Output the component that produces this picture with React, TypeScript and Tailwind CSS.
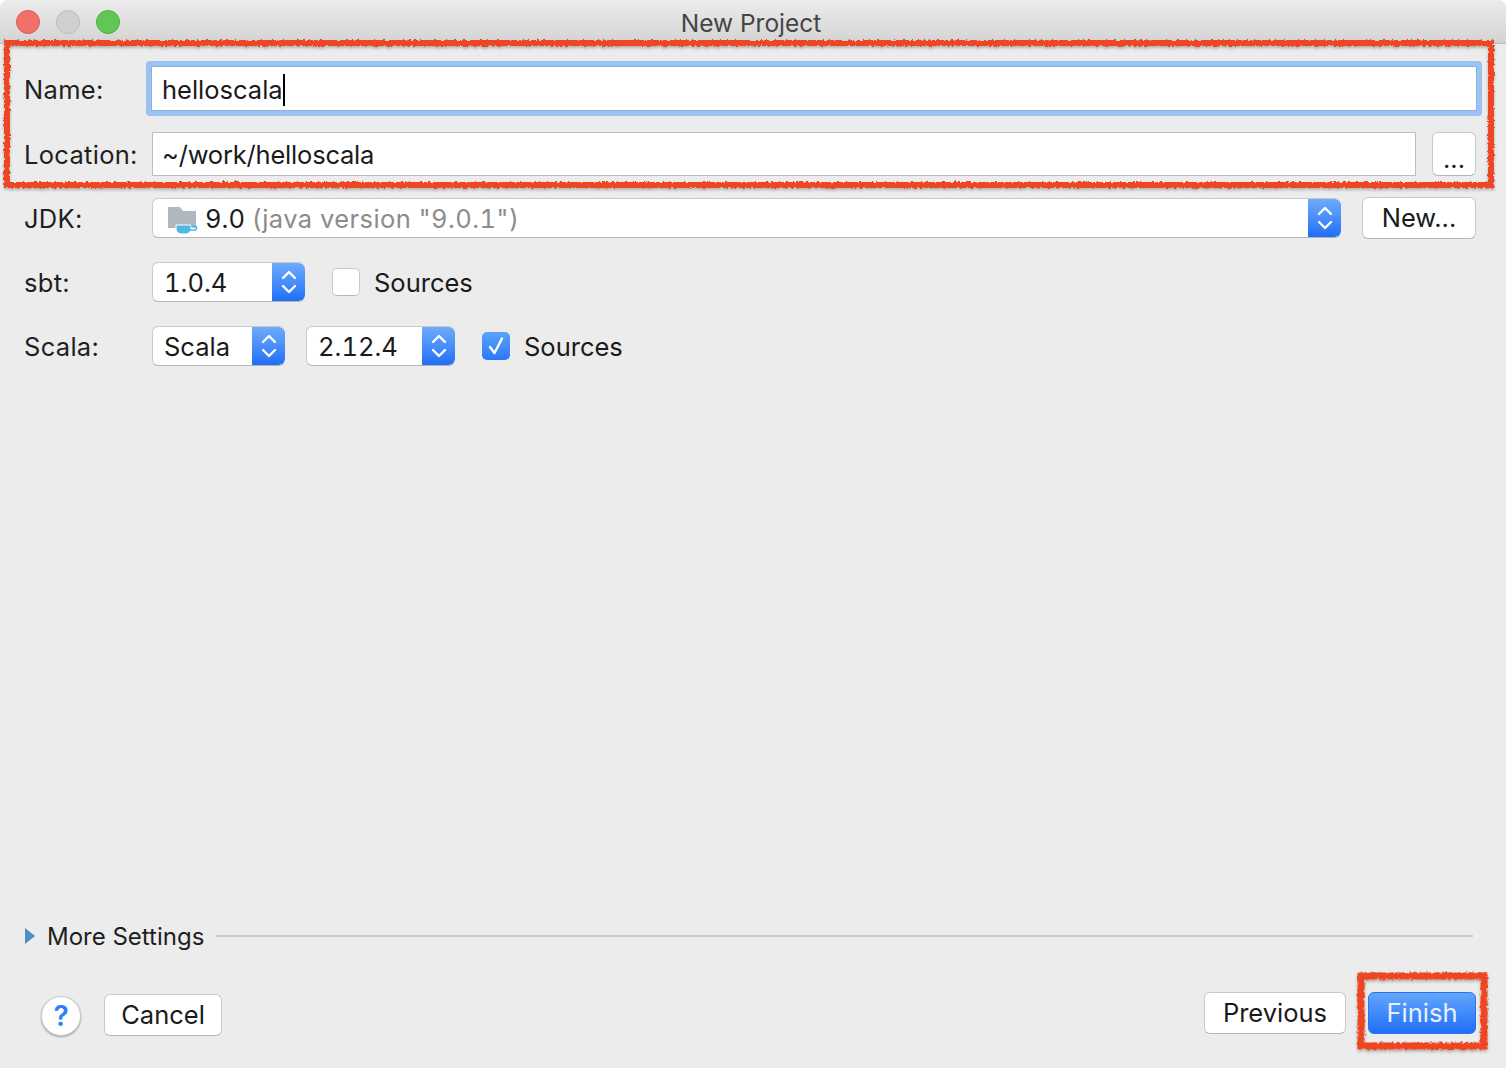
const font = "font-['Inter','Liberation_Sans',Arial,sans-serif]";

// small up/down chevrons on the blue end of a popup button
function Stepper() {
  return (
    <div className="flex h-full w-[33px] shrink-0 items-center justify-center rounded-r-[6px] bg-gradient-to-b from-[#6fabfb] to-[#1f6ef8]">
      <svg width="16" height="28" viewBox="0 0 16 28" fill="none" stroke="#fff" strokeWidth="2.4" strokeLinecap="round" strokeLinejoin="round">
        <path d="M2 10 L8 4 L14 10" />
        <path d="M2 18 L8 24 L14 18" />
      </svg>
    </div>
  );
}

function Select({ width, text }: { width: string; text: string }) {
  return (
    <div className={`flex h-[40px] ${width} items-center overflow-hidden rounded-[6px] border border-r-0 border-[#c9c9c9] border-b-[#b5b5b5] bg-white`}>
      <span className="flex-1 pl-[11px] pt-[2px] text-[25.5px] leading-none text-[#1a1a1a] tabular-nums">{text}</span>
      <Stepper />
    </div>
  );
}

function Check({ on }: { on?: boolean }) {
  if (on) {
    return (
      <div className="flex h-[28px] w-[28px] items-center justify-center rounded-[5px] bg-gradient-to-b from-[#5da3fb] to-[#2a78f8]">
        <svg width="18" height="20" viewBox="0 0 18 20" fill="none" stroke="#fff" strokeWidth="2.4" strokeLinecap="round" strokeLinejoin="round">
          <path d="M3 11 L7.5 17 L15 2.5" />
        </svg>
      </div>
    );
  }
  return <div className="h-[28px] w-[28px] rounded-[5px] border border-[#c9c9c9] border-b-[#b5b5b5] bg-white" />;
}

function Btn({ label, className }: { label: string; className: string }) {
  return (
    <button className={`flex h-[42px] items-center justify-center rounded-[6px] border border-[#c9c9c9] border-b-[#b5b5b5] bg-white text-[25.5px] leading-none text-[#1a1a1a] ${className}`}>
      {label}
    </button>
  );
}

function Label({ text }: { text: string }) {
  return <div className="w-[128px] shrink-0 pt-[2px] text-[25.5px] leading-none tracking-[0.3px] text-[#1f1f1f]">{text}</div>;
}

function JdkIcon() {
  return (
    <svg width="30" height="28" viewBox="0 0 30 28" className="shrink-0">
      <path d="M0 1 H12 L15 5 H28 V22 H0 Z" fill="#afb8bf" />
      <path d="M8 19 H23 V23 C23 26 20 28 17 28 H14 C11 28 8 26 8 23 Z" fill="#4fb8e8" stroke="#fff" strokeWidth="1" />
      <path d="M23 20 H27 C29 20 29 24 27 24 H22" fill="none" stroke="#4fb8e8" strokeWidth="1.6" />
    </svg>
  );
}

export default function App() {
  return (
    <div className={`relative flex h-[1068px] w-[1506px] flex-col overflow-hidden rounded-t-[8px] bg-[#ececec] ${font}`}>
      <div className="flex h-[44px] shrink-0 items-center border-b border-[#bdbdbd] bg-gradient-to-b from-[#ececec] to-[#d3d3d3]">
        <div className="ml-[16px] flex gap-[16px]">
          <div className="h-[24px] w-[24px] rounded-full border border-[#dc5a52] bg-[#f0706a]" />
          <div className="h-[24px] w-[24px] rounded-full border border-[#bdbdbd] bg-[#d0d0d0]" />
          <div className="h-[24px] w-[24px] rounded-full border border-[#4dae42] bg-[#62c654]" />
        </div>
        <div className="flex-1 pr-[124px] pt-[3px] text-center text-[24.5px] leading-none text-[#454545]">New Project</div>
      </div>

      <div className="flex flex-1 flex-col pl-[24px] pr-[30px]">
        <div className="mt-[23px] flex h-[43px] items-center">
          <Label text="Name:" />
          <div className="flex h-full flex-1 items-center rounded-[1px] bg-white pl-[10px] pt-[2px] text-[25.5px] leading-none text-[#1a1a1a] shadow-[0_0_0_1px_#8fb0d8,0_0_0_6px_#9bc3f2]">
            helloscala
            <span className="h-[32px] w-[2px] bg-black" />
          </div>
        </div>

        <div className="mt-[22px] flex h-[44px] items-center">
          <Label text="Location:" />
          <div className="flex h-full flex-1 items-center border border-[#bdbdbd] bg-white pl-[9px] pt-[2px] text-[25.5px] leading-none tracking-[-0.2px] text-[#1a1a1a]">
            ~/work/helloscala
          </div>
          <Btn label="..." className="ml-[16px] h-[44px] w-[44px] pt-[10px]" />
        </div>

        <div className="mt-[22px] flex h-[40px] items-center">
          <Label text="JDK:" />
          <div className="flex h-full flex-1 items-center overflow-hidden rounded-[6px] border border-r-0 border-[#c9c9c9] border-b-[#b5b5b5] bg-white">
            <div className="ml-[15px] mr-[7px] mt-[4px]">
              <JdkIcon />
            </div>
            <span className="flex-1 pt-[2px] text-[25.5px] leading-none text-[#1a1a1a] tabular-nums">
              9.0 <span className="tracking-[0.45px] text-[#8c8c8c]">(java version "9.0.1")</span>
            </span>
            <Stepper />
          </div>
          <Btn label="New..." className="ml-[21px] w-[114px]" />
        </div>

        <div className="mt-[24px] flex h-[40px] items-center">
          <Label text="sbt:" />
          <Select width="w-[153px]" text="1.0.4" />
          <div className="ml-[27px]">
            <Check />
          </div>
          <span className="ml-[14px] pt-[2px] text-[25.5px] leading-none text-[#1a1a1a]">Sources</span>
        </div>

        <div className="mt-[24px] flex h-[40px] items-center">
          <Label text="Scala:" />
          <Select width="w-[133px]" text="Scala" />
          <div className="ml-[21px]">
            <Select width="w-[149px]" text="2.12.4" />
          </div>
          <div className="ml-[27px]">
            <Check on />
          </div>
          <span className="ml-[14px] pt-[2px] text-[25.5px] leading-none text-[#1a1a1a]">Sources</span>
        </div>

        <div className="mt-auto flex h-[30px] items-center">
          <svg width="10" height="16" viewBox="0 0 10 16" className="ml-[1px] shrink-0">
            <path d="M0 0 L10 8 L0 16 Z" fill="#4a90c2" />
          </svg>
          <span className="ml-[12px] pt-[2px] text-[24px] leading-none text-[#1f1f1f]">More Settings</span>
          <div className="ml-[12px] mr-[3px] h-[2px] flex-1 bg-[#cdcdcd]" />
        </div>

        <div className="mt-[41px] flex h-[76px] items-start justify-between">
          <div className="ml-[17px] mt-[2px] flex items-start gap-[23px]">
            <div className="mt-[2px] flex h-[40px] w-[40px] items-center justify-center rounded-full border border-[#c9c9c9] bg-white text-[28px] font-semibold leading-none text-[#2f80f7] shadow-[0_1px_2px_#a0a0a0]">
              ?
            </div>
            <Btn label="Cancel" className="w-[118px]" />
          </div>
          <div className="flex gap-[22px]">
            <Btn label="Previous" className="w-[142px]" />
            <button className="flex h-[42px] w-[108px] items-center justify-center rounded-[6px] border border-[#2a72f0] bg-gradient-to-b from-[#62a5fb] to-[#1f6ef8] text-[25.5px] leading-none text-[#e9f1fe]">
              Finish
            </button>
          </div>
        </div>
      </div>

      {/* hand drawn red annotation frames over the dialog */}
      <svg className="pointer-events-none absolute inset-0" width="1506" height="1068" fill="none">
        <defs>
          <filter id="rough" x="-5%" y="-5%" width="110%" height="110%">
            <feTurbulence type="fractalNoise" baseFrequency="0.35" numOctaves="2" seed="4" />
            <feDisplacementMap in="SourceGraphic" scale="4" />
            <feDropShadow dx="0" dy="2" stdDeviation="1.5" floodColor="#000" floodOpacity="0.25" />
          </filter>
        </defs>
        <g filter="url(#rough)" stroke="#ee4423">
          <rect x="7" y="43" width="1484" height="142" strokeWidth="6" />
          <rect x="1361" y="976" width="123" height="70" strokeWidth="7" />
        </g>
      </svg>
    </div>
  );
}
